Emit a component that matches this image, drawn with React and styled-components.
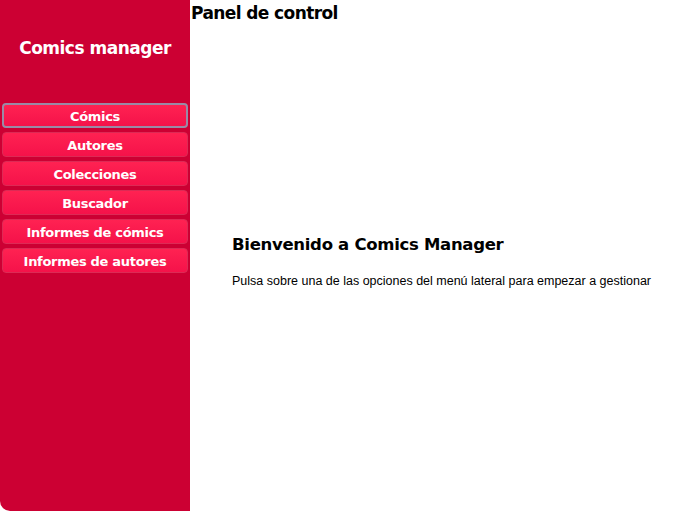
import styled, { createGlobalStyle } from "styled-components"

const Global = createGlobalStyle`
    html, body {
        margin: 0;
        padding: 0;
        background: #fff;
    }
    body {
        font-family: "DejaVu Sans", Tahoma, sans-serif;
    }
`

const menu = ['Cómics', 'Autores', 'Colecciones', 'Buscador', 'Informes de cómics', 'Informes de autores']

const App = () => {
    return <Wrapper>
        <Global />
        <Sidebar>
            <h1>Comics manager</h1>
            <nav>
                {menu.map((item, id) => {
                    return <MenuButton key={id} $active={id === 0}>{item}</MenuButton>
                })}
            </nav>
        </Sidebar>
        <Main>
            <h2>Panel de control</h2>
            <section>
                <h3>Bienvenido a Comics Manager</h3>
                <p>Pulsa sobre una de las opciones del menú lateral para empezar a gestionar</p>
            </section>
        </Main>
    </Wrapper>
}

const Wrapper = styled.div`
    display: flex;
    min-height: 511px;
`

const Sidebar = styled.aside`
    width: 190px;
    flex-shrink: 0;
    background: #cc0033;
    border-bottom-left-radius: 10px;
    display: flex;
    flex-direction: column;
    h1{
        margin: 38px 0 0;
        height: 65px;
        color: #fff;
        font-size: 17px;
        font-weight: bold;
        text-align: center;
        letter-spacing: -0.5px;
    }
    nav{
        display: flex;
        flex-direction: column;
        gap: 4px;
        padding: 0 2px 0 2px;
    }
`

const MenuButton = styled.button`
    height: 25px;
    border-radius: 4px;
    border: ${p => p.$active ? '2px solid #9a8aa6' : '1px solid #dd2a55'};
    background: linear-gradient(#ff2252, #f5124a);
    color: #fff;
    font-family: "DejaVu Sans", Tahoma, sans-serif;
    font-weight: bold;
    font-size: 13px;
    letter-spacing: -0.3px;
    padding: 2px 0 0;
    text-align: center;
`

const Main = styled.main`
    flex: 1;
    h2{
        margin: 3px 0 0 1px;
        font-size: 17px;
        font-weight: bold;
        letter-spacing: -0.6px;
        color: #000;
    }
    section{
        padding: 212px 0 0 42px;
        h3{
            margin: 0;
            font-size: 16.5px;
            font-weight: bold;
            letter-spacing: -0.3px;
        }
        p{
            margin: 20px 0 0;
            font-family: "Liberation Sans", Arial, sans-serif;
            font-size: 12.5px;
        }
    }
`

export default App
